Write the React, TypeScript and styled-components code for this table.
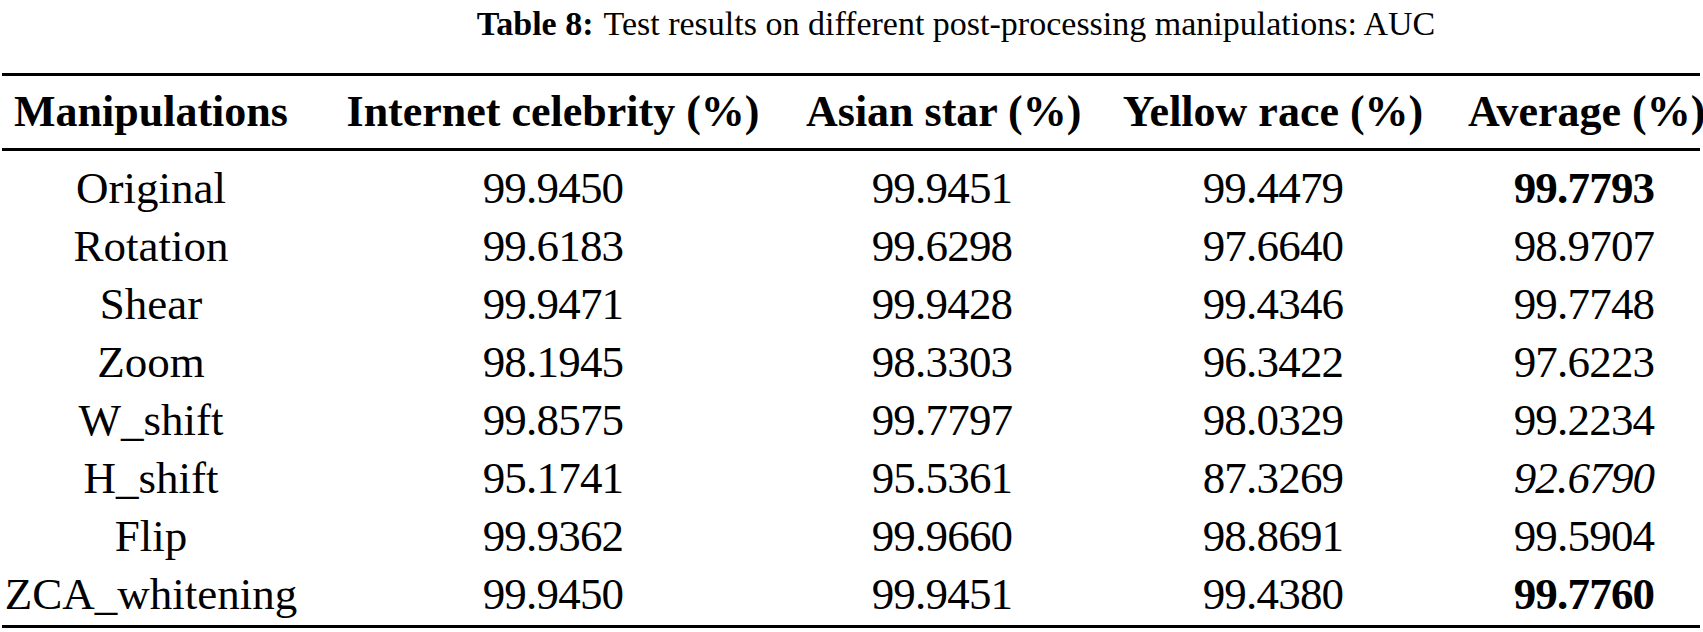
import React from 'react';
import styled, { createGlobalStyle } from 'styled-components';

const COLS = '298px 506px 272px 390px 232px';
const RULE = '3px solid #000';

const GlobalStyle = createGlobalStyle`
  html, body {
    margin: 0;
    padding: 0;
    background: #fff;
  }
  body {
    font-family: 'Liberation Serif', 'Times New Roman', serif;
    color: #000;
  }
`;

const Page = styled.div`
  width: 1703px;
  height: 632px;
  padding: 0 3px 0 2px;
  box-sizing: border-box;
  display: flex;
  flex-direction: column;
`;

const Caption = styled.div`
  height: 48px;
  line-height: 48px;
  font-size: 34px;
  text-align: center;
  padding-left: 210px;
  margin-bottom: 25px;
  white-space: nowrap;
`;

const CaptionLabel = styled.span`
  font-weight: bold;
  margin-right: 10px;
`;

const Table = styled.div`
  border-top: ${RULE};
  border-bottom: ${RULE};
`;

const HeadRow = styled.div`
  display: grid;
  grid-template-columns: ${COLS};
  align-items: center;
  height: 72px;
  border-bottom: ${RULE};
`;

const Body = styled.div`
  padding: 8px 0 2px;
`;

const Row = styled.div`
  display: grid;
  grid-template-columns: ${COLS};
  align-items: center;
  height: 58px;
`;

const HeadCell = styled.div`
  font-size: 44px;
  font-weight: bold;
  text-align: center;
  white-space: nowrap;
  line-height: 1;
`;

const Cell = styled.div<{ $num?: boolean; $bold?: boolean; $italic?: boolean }>`
  font-size: 45px;
  line-height: 1;
  text-align: center;
  white-space: nowrap;
  letter-spacing: ${(p) => (p.$num ? '-0.8px' : '0')};
  font-weight: ${(p) => (p.$bold ? 'bold' : 'normal')};
  font-style: ${(p) => (p.$italic ? 'italic' : 'normal')};
`;

const headers = [
  'Manipulations',
  'Internet celebrity (%)',
  'Asian star (%)',
  'Yellow race (%)',
  'Average (%)',
];

type Mark = '' | 'b' | 'i';

const rows: { name: string; values: string[]; avg: Mark }[] = [
  { name: 'Original', values: ['99.9450', '99.9451', '99.4479', '99.7793'], avg: 'b' },
  { name: 'Rotation', values: ['99.6183', '99.6298', '97.6640', '98.9707'], avg: '' },
  { name: 'Shear', values: ['99.9471', '99.9428', '99.4346', '99.7748'], avg: '' },
  { name: 'Zoom', values: ['98.1945', '98.3303', '96.3422', '97.6223'], avg: '' },
  { name: 'W_shift', values: ['99.8575', '99.7797', '98.0329', '99.2234'], avg: '' },
  { name: 'H_shift', values: ['95.1741', '95.5361', '87.3269', '92.6790'], avg: 'i' },
  { name: 'Flip', values: ['99.9362', '99.9660', '98.8691', '99.5904'], avg: '' },
  { name: 'ZCA_whitening', values: ['99.9450', '99.9451', '99.4380', '99.7760'], avg: 'b' },
];

export default function App() {
  return (
    <>
      <GlobalStyle />
      <Page>
        <Caption>
          <CaptionLabel>Table 8:</CaptionLabel>
          Test results on different post-processing manipulations: AUC
        </Caption>
        <Table>
          <HeadRow>
            {headers.map((h) => (
              <HeadCell key={h}>{h}</HeadCell>
            ))}
          </HeadRow>
          <Body>
            {rows.map((r) => (
              <Row key={r.name}>
                <Cell>{r.name}</Cell>
                {r.values.map((v, i) => {
                  const last = i === r.values.length - 1;
                  return (
                    <Cell
                      key={i}
                      $num
                      $bold={last && r.avg === 'b'}
                      $italic={last && r.avg === 'i'}
                    >
                      {v}
                    </Cell>
                  );
                })}
              </Row>
            ))}
          </Body>
        </Table>
      </Page>
    </>
  );
}
